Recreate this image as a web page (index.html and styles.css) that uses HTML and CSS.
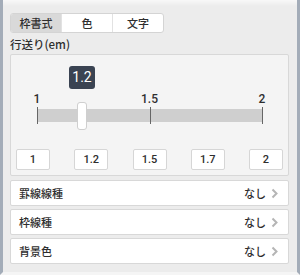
FILE: index.html
```html
<!DOCTYPE html>
<html lang="ja">
<head>
<meta charset="utf-8">
<link rel="stylesheet" href="styles.css">
</head>
<body>
<div class="frame">
  <div class="tabs">
    <div class="tab active">枠書式</div>
    <div class="tab">色</div>
    <div class="tab">文字</div>
  </div>
  <div class="label">行送り(em)</div>
  <div class="panel">
    <div class="slider">
      <div class="tooltip" style="left: 20%">1.2</div>
      <div class="tick" style="left: 0%"><span>1</span></div>
      <div class="tick" style="left: 50%"><span>1.5</span></div>
      <div class="tick" style="left: 100%"><span>2</span></div>
      <div class="track"></div>
      <div class="thumb" style="left: 20%"></div>
    </div>
    <div class="presets">
      <div class="preset">1</div>
      <div class="preset">1.2</div>
      <div class="preset">1.5</div>
      <div class="preset">1.7</div>
      <div class="preset">2</div>
    </div>
  </div>
  <div class="rows">
    <div class="row"><span class="name">罫線線種</span><span class="value">なし</span><svg class="chev" width="7" height="11" viewBox="0 0 7 11"><polyline points="1.5,1.5 5.5,5.5 1.5,9.5" fill="none" stroke="#b5b5b5" stroke-width="2"/></svg></div>
    <div class="row"><span class="name">枠線種</span><span class="value">なし</span><svg class="chev" width="7" height="11" viewBox="0 0 7 11"><polyline points="1.5,1.5 5.5,5.5 1.5,9.5" fill="none" stroke="#b5b5b5" stroke-width="2"/></svg></div>
    <div class="row"><span class="name">背景色</span><span class="value">なし</span><svg class="chev" width="7" height="11" viewBox="0 0 7 11"><polyline points="1.5,1.5 5.5,5.5 1.5,9.5" fill="none" stroke="#b5b5b5" stroke-width="2"/></svg></div>
  </div>
</div>
</body>
</html>
```
FILE: styles.css
```css
* { box-sizing: border-box; }
html, body { margin: 0; padding: 0; }
body {
  width: 300px;
  height: 275px;
  overflow: hidden;
  font-family: "Noto Sans CJK JP", "Roboto", sans-serif;
  font-size: 11px;
  font-weight: 500;
  color: #2e2e2e;
}
.frame {
  height: 275px;
  background: linear-gradient(#f8f8f8 0px, #ececec 6px, #ececec 100%);
  border-left: 3px solid #a3acb8;
  border-right: 3px solid #a3acb8;
  border-bottom: 3px solid #f5f5f5;
  padding: 13px 8px 0 7px;
}
.tabs {
  display: flex;
  width: 154px;
  height: 20px;
  background: #fff;
  border: 1px solid #d4d4d4;
  border-radius: 3px;
  overflow: hidden;
}
.tab {
  flex: 1;
  display: flex;
  align-items: center;
  justify-content: center;
  font-size: 11px;
  border-left: 1px solid #e2e2e2;
}
.tab:first-child { border-left: none; }
.tab.active { background: #d9d9d9; }
.label {
  margin-top: 4px;
  height: 14px;
  line-height: 14px;
  font-size: 11.5px;
}
.panel {
  margin-top: 3px;
  background: #f4f4f4;
  border: 1px solid #d8d8d8;
  border-radius: 2px;
  padding: 11px 5px 5px 5px;
}
.slider {
  position: relative;
  height: 64px;
  margin: 0 21px 0 21px;
}
.tooltip {
  position: absolute;
  top: 0;
  width: 26px;
  height: 23px;
  margin-left: -13px;
  background: #3a4352;
  color: #fff;
  border-radius: 3px;
  font-family: "Roboto", sans-serif;
  font-weight: 400;
  font-size: 14px;
  line-height: 23px;
  text-align: center;
}
.track {
  position: absolute;
  left: 0;
  right: 0;
  top: 43px;
  height: 13px;
  background: #cfcfcf;
}
.tick {
  position: absolute;
  top: 41px;
  width: 1px;
  height: 17px;
  background: #666;
  z-index: 1;
}
.tick span {
  position: absolute;
  bottom: 19px;
  left: 0;
  transform: translateX(-50%);
  font-family: "Roboto", sans-serif;
  font-size: 12px;
  line-height: 12px;
}
.thumb {
  position: absolute;
  top: 36px;
  width: 10px;
  height: 28px;
  margin-left: -5px;
  background: #fff;
  border: 1px solid #cfcfcf;
  border-radius: 3px;
  z-index: 2;
}
.presets {
  margin-top: 19px;
  display: flex;
  justify-content: space-between;
}
.preset {
  width: 34px;
  height: 21px;
  background: #fff;
  border: 1px solid #d6d6d6;
  border-radius: 2px;
  display: flex;
  align-items: center;
  justify-content: center;
  font-family: "Roboto", sans-serif;
  font-size: 11px;
}
.rows {
  margin-top: 4px;
  display: flex;
  flex-direction: column;
  gap: 3px;
}
.row {
  height: 26px;
  background: #fff;
  border: 1px solid #d8d8d8;
  border-radius: 2px;
  display: flex;
  align-items: center;
  padding: 0 10px 0 8px;
}
.name { flex: 1; }
.value { margin-right: 5px; }
.chev { display: block; }
```
